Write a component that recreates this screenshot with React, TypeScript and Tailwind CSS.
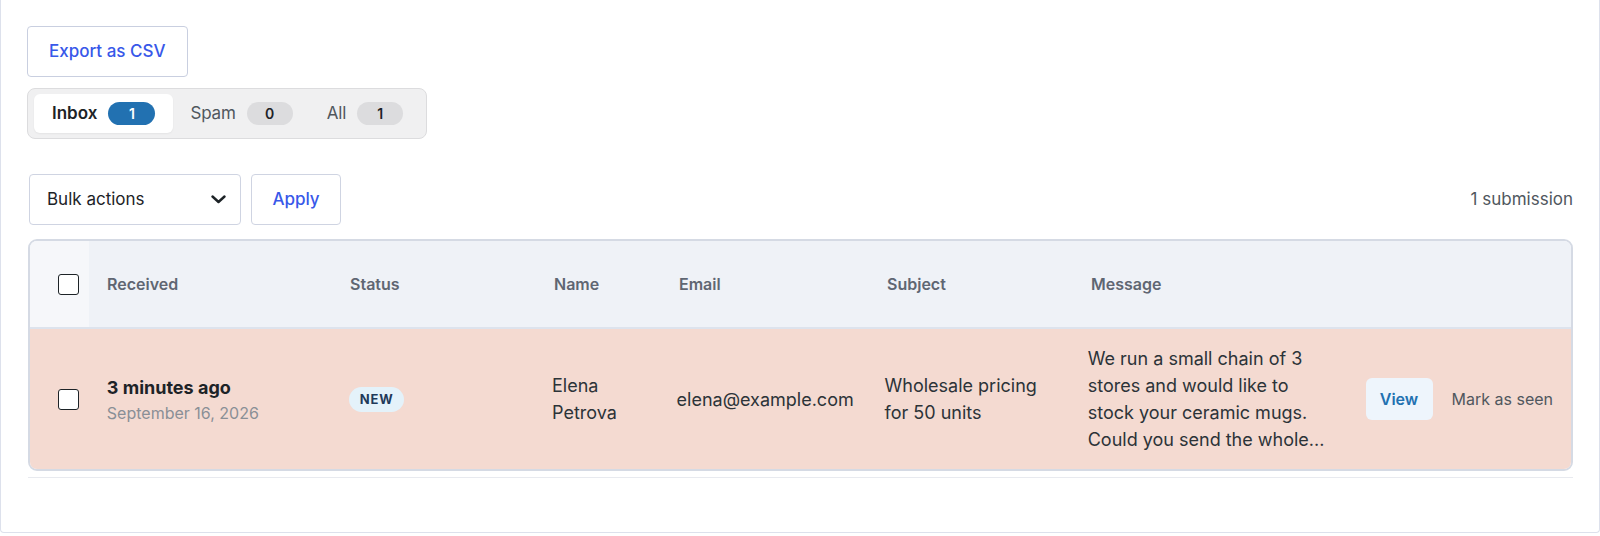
const Tab = ({ label, count, active }: { label: string; count: number; active?: boolean }) => {
  return (
    <button
      className={
        active
          ? "flex items-center gap-[11px] h-[39px] px-[18px] rounded-[6px] bg-white shadow-[0_1px_2px_rgba(0,0,0,0.05)]"
          : "flex items-center gap-[11px] h-[39px] px-[17px] rounded-[6px]"
      }
    >
      <span className={active ? "text-[17px] font-semibold text-[#1d2327]" : "text-[17px] tracking-[-0.01em] text-[#50575e]"}>{label}</span>
      <span
        className={
          active
            ? "flex items-center justify-center w-[47px] h-[23px] rounded-full bg-[#2271b1] text-white text-[14px] font-semibold"
            : "flex items-center justify-center w-[46px] h-[23px] rounded-full bg-[#dcdcde] text-[#1d2327] text-[14px] font-semibold"
        }
      >
        {count}
      </span>
    </button>
  )
}

const Checkbox = () => (
  <span className="block w-[21px] h-[21px] rounded-[3px] border-[1.5px] border-[#1d2327] bg-white" />
)

const App = () => {
  return (
    <div className="min-h-screen bg-white font-['Inter',sans-serif]">
      <div className="border-x border-b border-[#dde1ec] rounded-b-[4px] pt-[26px] pl-[26px] pr-[26px] pb-[54px]">
        <div className="flex">
          <button className="h-[51px] px-[21px] rounded-[4px] border border-[#c9cfe0] bg-white text-[17px] font-medium text-[#3858e9]">
            Export as CSV
          </button>
        </div>

        <div className="mt-[11px] flex w-fit items-center px-[6px] py-[5px] rounded-[8px] border border-[#dcdcde] bg-[#f0f0f1]">
          <Tab label="Inbox" count={1} active />
          <Tab label="Spam" count={0} />
          <Tab label="All" count={1} />
        </div>

        <div className="mt-[35px] flex items-center justify-between">
          <div className="flex items-center gap-[10px] ml-[2px]">
            <div className="flex items-center justify-between w-[212px] h-[51px] pl-[17px] pr-[14px] rounded-[4px] border border-[#cfd4e2] bg-white">
              <span className="text-[17px] text-[#1d2327]">Bulk actions</span>
              <svg width="15" height="9" viewBox="0 0 15 9" fill="none">
                <path d="M1.5 1.5L7.5 7L13.5 1.5" stroke="#1d2327" strokeWidth="2.4" strokeLinecap="round" strokeLinejoin="round" />
              </svg>
            </div>
            <button className="w-[90px] h-[51px] rounded-[4px] border border-[#cfd4e2] bg-white text-[17px] font-medium text-[#3858e9]">
              Apply
            </button>
          </div>
          <span className="text-[17px] text-[#50575e]">1 submission</span>
        </div>

        <div className="mt-[14px] ml-[1px] rounded-[9px] border-2 border-[#d5dae4] overflow-hidden">
          <div className="flex h-[88px] bg-[#eff2f7] border-b-2 border-[#dde3ed] text-[16px] font-semibold text-[#5f6672]">
            <div className="flex items-center w-[59px] pl-[28px] bg-[#f6f7fa]">
              <Checkbox />
            </div>
            <div className="flex items-center w-[243px] px-[18px]">Received</div>
            <div className="flex items-center w-[204px] px-[18px]">Status</div>
            <div className="flex items-center w-[125px] px-[18px]">Name</div>
            <div className="flex items-center w-[208px] px-[18px]">Email</div>
            <div className="flex items-center w-[204px] px-[18px]">Subject</div>
            <div className="flex items-center w-[279px] px-[18px]">Message</div>
            <div className="flex-1" />
          </div>

          <div className="flex h-[140px] bg-[#f4dad1] text-[18px] leading-[27px] text-[#2c3338]">
            <div className="flex items-center w-[59px] pl-[28px]">
              <Checkbox />
            </div>
            <div className="flex flex-col justify-center w-[243px] px-[18px]">
              <span className="font-bold text-[#1d2327]">3 minutes ago</span>
              <span className="text-[16px] leading-[24px] text-[#8a8f96]">September 16, 2026</span>
            </div>
            <div className="flex items-center w-[204px] px-[18px]">
              <span className="h-[25px] px-[11px] flex items-center rounded-full bg-[#e4f2fa] text-[13px] font-bold tracking-[0.06em] text-[#1f3a5a]">
                NEW
              </span>
            </div>
            <div className="flex items-center w-[125px] px-[18px]">Elena Petrova</div>
            <div className="flex items-center w-[208px] px-[18px] whitespace-nowrap">elena@example.com</div>
            <div className="flex items-center w-[204px] px-[18px]">Wholesale pricing for 50 units</div>
            <div className="flex flex-col justify-center w-[279px] px-[18px] whitespace-nowrap">
              <span>We run a small chain of 3</span>
              <span>stores and would like to</span>
              <span>stock your ceramic mugs.</span>
              <span>Could you send the whole...</span>
            </div>
            <div className="flex flex-1 items-center gap-[19px] px-[18px]">
              <button className="w-[67px] h-[42px] rounded-[6px] bg-[#eef5fc] text-[16px] font-semibold text-[#2271b1]">
                View
              </button>
              <span className="text-[16px] text-[#50575e] whitespace-nowrap">Mark as seen</span>
            </div>
          </div>
        </div>

        <div className="mt-[6px] ml-[1px] h-px bg-[#e8eaef]" />
      </div>
    </div>
  )
}

export default App
